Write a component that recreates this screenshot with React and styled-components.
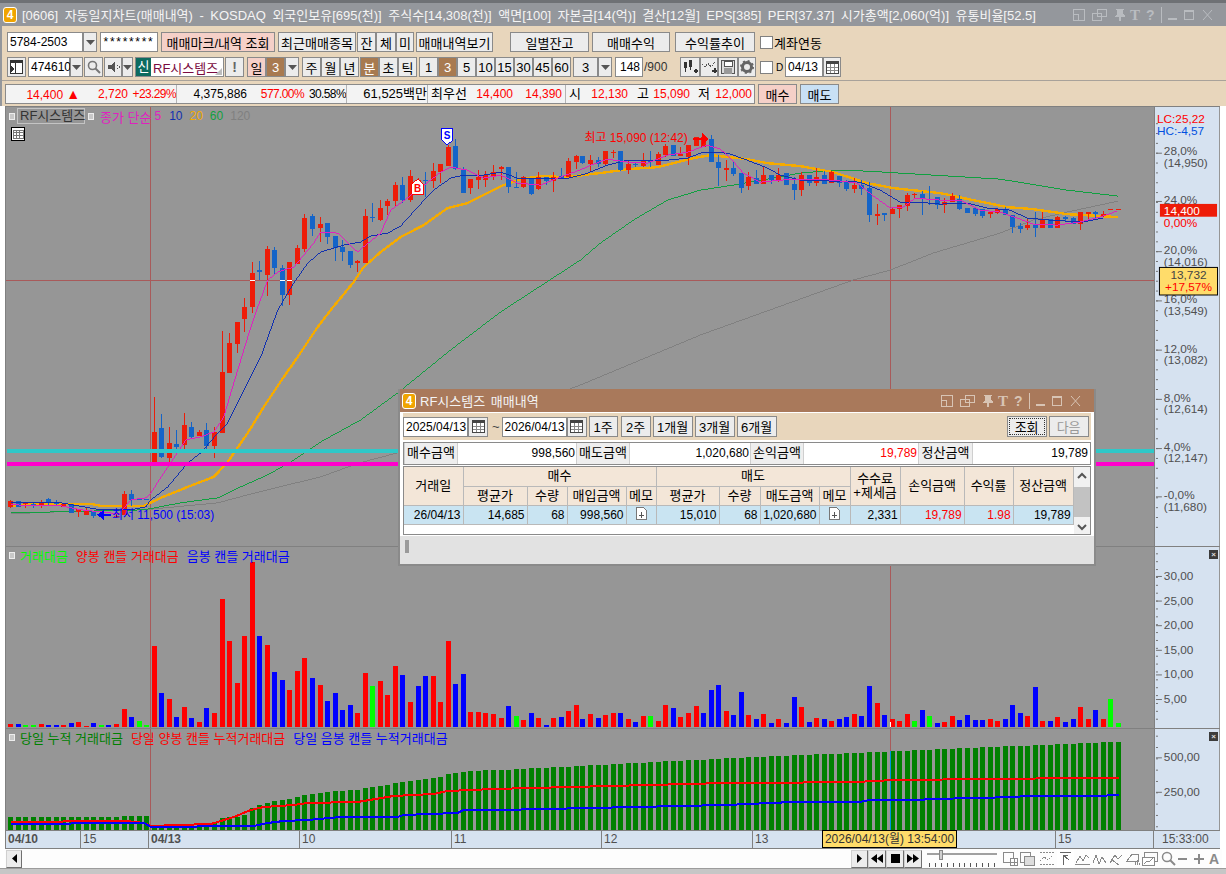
import React from 'react';
import styled, { createGlobalStyle } from 'styled-components';

const FONT = '"Liberation Sans","Noto Sans CJK KR",sans-serif';

const Global = createGlobalStyle`
  html,body{margin:0;padding:0;background:#fff;}
  body{font-family:${FONT};font-size:12px;color:#000;}
  *{box-sizing:border-box;}
`;

const Win = styled.div`
  position:relative; width:1226px; height:874px; overflow:hidden; background:#fff;
  border-top:3px solid #6e7175; display:flex; flex-direction:column;
`;
const TitleBar = styled.div`
  height:23px; display:flex; align-items:center; padding-left:${p=>p.$pl||3}px; flex:none;
  background:${p=>p.$bg||'#94979c'}; color:#f4f4f4; white-space:pre;
`;
const Badge = styled.div`
  width:14px; height:16px; border:1px solid #fff; border-radius:3px; background:#f0a400; color:#fff;
  font:bold 12px/14px ${FONT}; text-align:center; margin-right:${p=>p.$mr||5}px; flex:none;
`;
const TitleText = styled.span`
  font-size:13px; letter-spacing:${p=>p.$ls||0}px; word-spacing:${p=>p.$ws||0}px; flex:1; overflow:hidden;
`;
const Toolbar = styled.div`
  height:80px; flex:none; background:#e8d6bc; border-left:2px solid #94979c; padding:6px 0 0 5px;
`;
const Row = styled.div`
  display:flex; align-items:center; height:${p=>p.$h||20}px; margin-top:${p=>p.$mt||0}px;
`;
const Divider = styled.div`
  height:1px; background:#a8a29a; margin:3px 0 3px -5px;
`;
const Input = styled.div`
  width:${p=>p.$w}px; height:20px; flex:none; margin-left:${p=>p.$ml||0}px;
  background:#fff; border:1px solid #8a8a8a; padding:0 2px; line-height:18px; white-space:pre;
  text-align:${p=>p.$align||'left'}; letter-spacing:${p=>p.$ls||0}px;
`;
const Btn = styled.div`
  width:${p=>p.$w}px; height:${p=>p.$h||20}px; flex:none; margin-left:${p=>p.$ml||0}px;
  background:${p=>p.$bg||'#ececec'}; color:${p=>p.$color||'#000'};
  border:1px solid #8a8a8a; display:flex; align-items:center; justify-content:center;
  white-space:pre; font-size:13px;
`;
const Check = styled.div`
  width:13px; height:13px; flex:none; margin-left:${p=>p.$ml||0}px; background:#fff; border:1px solid #808080;
`;
const Label = styled.span`
  margin-left:${p=>p.$ml||0}px; color:${p=>p.$color||'#000'}; white-space:pre; flex:none;
  font-size:${p=>p.$size||13}px; ${p=>p.$w?`width:${p.$w}px;`:''}
`;
const NameBox = styled.div`
  width:89px; height:20px; margin-left:${p=>p.$ml||0}px; flex:none; display:flex; align-items:center;
  background:#fff; border:1px solid #8a8a8a; color:#7a0a40; position:relative; font-size:13px;
`;
const ShinTag = styled.span`
  width:15px; height:18px; background:#0d6b5f; color:#fff; text-align:center; line-height:18px; margin-right:2px; flex:none;
`;
const Corner = styled.span`
  position:absolute; right:1px; bottom:1px; width:0; height:0;
  border-left:7px solid transparent; border-bottom:7px solid #bdbdbd;
`;
const QuoteBox = styled.div`
  width:750px; height:20px; flex:none; margin-left:-2px; background:#f3f3f3; border:1px solid #8a8a8a;
  display:flex; align-items:center;
`;
const Quote = styled.span`
  width:${p=>p.$w}px; flex:none; height:18px; line-height:18px; white-space:pre;
  text-align:${p=>p.$left?'left':'right'}; color:${p=>p.$color||'#000'};
  padding-left:${p=>p.$left?3:0}px; margin-left:${p=>p.$ml||0}px;
  font-size:${p=>p.$size||12}px; letter-spacing:${p=>p.$ls||0}px;
  border-left:${p=>p.$sep?'1px solid #b4b4b4':'none'};
`;
const UpMark = styled.span`
  font-size:14px; margin-left:3px;
`;

const Chart = styled.div`
  flex:none; padding-left:5px; width:1220px; position:relative;
`;
const Pane = styled.div`
  position:relative; height:${p=>p.$h}px; display:grid; grid-template-columns:1149px 65px;
  border-top:1px solid #808080; background:#969696;
`;
const Plot = styled.svg`
  display:block; border-left:1px solid #808080;
`;
const Axis = styled.svg`
  display:block; background:#d6e2f0; border-left:1px solid #808080;
`;
const Legend = styled.div`
  position:absolute; left:${p=>p.$x}px; top:${p=>p.$y}px; display:flex; align-items:center; white-space:pre; height:16px;
`;
const LegendText = styled.span`
  color:${p=>p.$color}; margin-left:${p=>p.$ml||0}px; font-size:${p=>p.$size||13}px;
`;
const Dot = styled.span`
  width:6px; height:7px; background:#c8c8c8; border:1px solid #ededed; margin-right:${p=>p.$mr||0}px; margin-left:${p=>p.$ml||0}px; flex:none;
`;
const NameTag = styled.span`
  border:1px solid #c4c4c4; color:#333; height:16px; line-height:14px; padding:0 2px; width:68px; margin-left:2px; flex:none; font-size:13px;
`;
const GridTool = styled.svg`
  position:absolute; left:6px; top:20px;
`;
const CloseMark = styled.div`
  position:absolute; right:2px; top:${p=>p.$y}px; width:9px; height:9px; background:#3c3c3c; color:#ddd;
  font:bold 8px/9px ${FONT}; text-align:center;
`;
const TimeRow = styled.div`
  position:relative; height:19px; display:flex; background:#d6e2f0; border-top:1px solid #808080; border-bottom:1px solid #808080; width:1215px;
`;
const TimeCell = styled.div`
  width:${p=>p.$w}px; flex:none; height:17px; line-height:17px; padding-left:${p=>p.$pl||2}px; white-space:pre;
  color:#505050; font-weight:${p=>p.$bold?'bold':'normal'}; border-left:1px solid #808080;
`;
const TimeTip = styled.div`
  position:absolute; left:817px; top:-1px; width:135px; height:18px; background:#ffdc6a; border:1px solid #000;
  color:#333; line-height:16px; text-align:center; white-space:pre;
`;
const ScrollRow = styled.div`
  height:19px; display:flex; align-items:center; background:#fdfdfd; width:1217px;
`;
const ScrollTrack = styled.div`
  width:829px; flex:none;
`;
const ScrollBtn = styled.div`
  width:${p=>p.$w||17}px; height:18px; flex:none; margin-left:${p=>p.$ml||0}px; background:#ececec;
  border:1px solid #d0d0d0; border-right-color:#707070; border-bottom-color:#707070;
  display:flex; align-items:center; justify-content:center;
`;
const Bottom = styled.div`
  flex:1; border-top:1px solid #9c9c9c; background:#c6c6c6;
`;

const Dialog = styled.div`
  position:absolute; left:398px; top:386px; width:698px; height:177px; background:#fff;
  border:2px solid #8a8a8a; border-top:0; display:flex; flex-direction:column;
`;
const DlgTool = styled.div`
  height:27px; margin:1px 3px 0; background:#e8d6bc; display:flex; align-items:center; flex:none;
`;
const Sum = styled.div`
  height:23px; margin:2px 3px 0; border:1px solid #8a8a8a; display:flex; flex:none; background:#fff;
`;
const SumLabel = styled.div`
  width:${p=>p.$w}px; flex:none; background:#eeeeee; text-align:center; line-height:20px; font-size:13px;
  border-right:1px solid #cfcfcf; border-left:1px solid #cfcfcf;
`;
const SumVal = styled.div`
  width:${p=>p.$w}px; flex:none; text-align:right; line-height:20px; padding-right:1px; color:${p=>p.$color||'#000'};
`;
const TableBox = styled.div`
  height:69px; margin:1px 3px 0; border:1px solid #8a8a8a; display:flex; flex:none; background:#fff;
`;
const Table = styled.table`
  border-collapse:collapse; table-layout:fixed; width:669px; height:57px; flex:none;
  th{background:#f3e6d8; font-weight:normal; font-size:13px; border:1px solid #b9b9b9; height:19px; padding:0; white-space:pre; line-height:14px;}
  td{background:#c9e4f2; border:1px solid #b9b9b9; height:19px; padding:0 2px 0 0; text-align:right; white-space:pre; font-size:12px;}
  tr:first-child th{border-top:0;} th:first-child,td:first-child{border-left:0;}
  td.memo{text-align:center; padding:0;}
`;
const Red = styled.span`color:#f00;`;
const VScroll = styled.div`
  width:16px; flex:none; background:#f1f1f1; display:flex; flex-direction:column; align-items:center; justify-content:space-between; padding:5px 0 3px;
`;
const Thumb = styled.div`
  width:100%; height:30px; background:#c2c2c2;
`;
const DlgFoot = styled.div`
  flex:1; background:#e2e2e2; margin-top:1px; padding:4px 0 0 5px;
`;
const Grip = styled.div`
  width:4px; height:13px; background-image:radial-gradient(#9a9a9a 1px,transparent 1px); background-size:2px 2px;
`;
const Pad = styled.div`
  width:3px; flex:none;
`;

// pixel rows read from the chart: colour, body top, body bottom, wick top, wick bottom
const CANDLES = [
['r',501,507,500,508],['b',501,507],['r',503,504,502,508],['b',504,505,503,508],['r',502,505,500,508],
['b',499,503,498,505],['b',503,504,500,505],['r',504,507,503,507],['b',504,513],['r',509,512,509,517],
['r',511,515,508,515],['b',511,516,511,518],['b',515,516],['b',515,516],['r',516,517,513,518],
['r',494,515,491,515],['b',494,500,490,506],['b',499,500],['b',499,500],
['r',432,462,397,462],['b',428,457,414,458],['r',443,458,427,465],['b',444,447,430,449],['r',425,445,413,449],
['b',427,437,422,438],['r',432,436,430,436],['b',430,446,423,449],['r',432,446,427,458],['r',372,433,331,433],
['r',343,373,333,373],['r',322,344,322,353],['r',307,319,298,332],['r',273,307,262,313],['b',270,272,261,280],
['r',249,275,246,296],['b',250,268,247,275],['b',268,295,265,306],['r',262,295,262,305],['r',248,264,245,264],
['r',218,249,214,252],['b',216,229,214,236],['r',224,228,217,242],['b',223,237,223,244],['b',236,248,236,261],
['b',247,252,240,261],['b',251,265,251,268],['r',261,263,260,272],['r',216,263,209,263],['b',217,218,203,222],
['r',208,220,200,221],['r',201,206,199,215],['r',185,201,182,207],
['b',185,200,177,203],['r',176,200,170,202],['r',180,186,178,190],['b',180,181,172,197],['r',171,181,163,188],
['r',164,172,164,183],['r',147,166,145,166],['b',146,169,139,170],['b',169,193,167,193],['r',179,188,179,194],
['r',177,180,170,189],['r',175,180,171,187],['r',172,176,165,180],['r',167,169,166,180],['b',167,187,167,193],
['b',187,188,172,188],['r',177,187,176,188],['b',178,194,178,195],['r',177,189,172,190],['b',177,181,177,185],
['r',177,181,172,192],['b',176,178,168,179],['r',161,177,158,177],['r',156,162,155,169],['b',156,163,156,164],
['r',160,164,155,172],['b',160,164,157,167],['r',151,164,151,166],['r',152,153,150,158],['b',151,170,151,171],
['r',164,170,161,174],['b',164,165,162,167],['r',160,166,153,167],['b',161,162,151,167],['r',154,165,152,165],
['r',146,155,144,157],['b',145,156],['r',154,156,147,156],['r',145,157,145,165],['r',137,146],
['r',137,147],['b',139,162,135,162],['b',162,168,155,186],['r',168,170,160,181],['b',168,174,162,176],
['b',173,188,173,193],['r',177,186,172,190],['b',178,184,170,184],['r',175,184,166,184],['b',175,180,175,184],
['r',175,181,168,182],['b',173,185],['b',184,190,177,200],
['r',175,190,172,196],['b',175,183,175,186],['r',177,183,168,186],['b',175,184,171,184],['r',172,183,171,183],
['b',176,183,176,187],['b',182,189,180,191],['r',185,189,178,193],['b',185,189,180,195],['b',188,215,182,222],
['r',214,216,204,225],['b',213,215,213,221],['r',209,214,208,214],['r',205,209,205,218],['r',195,206,193,211],
['r',194,195,193,199],['b',194,199,191,215],['b',199,200,186,205],['b',197,205,197,209],['r',202,205,198,213],
['r',196,202,193,202],['b',199,209,195,210],['b',208,213],['b',208,214,208,216],['b',209,216,209,218],
['r',212,214,212,218],['r',209,213,209,214],['b',209,215,207,215],['b',215,227,215,233],['b',226,229,223,233],
['r',225,228,219,230],['b',224,228,212,237],['r',219,228,212,228],['b',219,228],['r',217,228,216,228],
['b',217,219,216,221],['b',218,224,217,224],['r',212,224,212,230],['r',212,214,212,221],['b',212,214,211,218],
['r',214,216,211,217],['r',209,210],['r',209,210],
];
// y of volume bars in two crops of the reference (crop row, colour)
const V1 = 'r552 b552 g556 g556 r552 b555 b555 r555 b549 r546 r558 b549 g556 b555 r552 r507 b531 g543 g555 r318 b459 r477 b531 r501 b534 r546 b504 r519 r177 r303 r429 r288 r66 b288 r315 b396 b420 r450 r393 r354 b414 r435 b483 b459 b510 b495 r519 r399 g438 r423 r465 r378 b405 r486 b438 b408 r408 r486 r303 b432 b402 r516 r516 r519 r522 r534';
const V2 = 'b438 g468 r480 b459 r474 b495 r474 b471 r453 r435 b477 r462 b474 r465 r459 b459 r477 b486 r468 g468 r483 r435 b444 r471 r459 r438 b459 b390 b375 r453 b465 b396 r465 b477 r462 b489 r477 b489 b411 r441 b486 r474 b477 r483 b477 b471 r462 b468 b378 r429 b465 r477 r483 r462 g483 b450 g468 b489 r486 r468 b480 b465 b480 b480 r477 r483 b477 b435 b459 r468 b381 r483 b483 r471 b486 b477 r441 r477 b450 r477 g417 g489';
const VOLS = [
  ...V1.split(' ').map(s=>[s[0],(561-+s.slice(1))/3]),
  ...V2.split(' ').map(s=>[s[0],(501-+s.slice(1))/3]),
];
const CUM_HEAD = [276,276,276,276,276,276,276,276,276,276,276,276,276,276,276,273,273,273,273,307,305,304,302,300,298,296,294,290,280,277,275,270,250,240,233,228,225,222,216,210,207,204,201,198,198,195,195,189,186,183,180,174,171,168,165,162,159,156,147,144,141,138,138,135,135,135];
const cumTop = i => {
  let z;
  if (i < CUM_HEAD.length) z = CUM_HEAD[i];
  else if (i <= 96) z = 135 - (i-65)*36/31;
  else z = 99 - (i-96)*49/51;
  return Math.round(725 + z/3);
};
const bx = i => Math.round(9.4 + 7.54*i);

const MA5 = '10,505 60,506 80,510 118,514 130,500 145,498 150,493 167,467 185,440 200,437 213,432 223,417 233,383 247,337 257,307 267,280 277,272 293,267 313,243 320,232 337,233 347,243 357,252 365,245 380,233 390,210 400,203 417,190 430,180 440,172 450,167 467,170 483,178 500,175 517,183 540,185 557,178 573,172 590,165 607,159 627,162 647,163 667,155 687,152 707,145 720,149 730,158 743,173 760,182 780,180 800,179 833,180 857,183 872,195 890,208 903,207 915,198 940,200 960,200 980,210 1000,212 1017,218 1033,224 1057,225 1080,222 1100,217 1117,211';
const MA10 = '10,503 60,503 100,510 130,510 145,507 150,500 167,487 187,463 200,453 217,433 227,423 243,390 260,357 277,310 293,283 307,263 320,252 343,245 360,242 370,236 387,233 400,226 417,207 433,190 450,178 463,175 483,175 500,172 517,178 543,178 567,178 587,173 607,165 627,160 667,160 687,158 703,152 727,153 747,160 767,168 780,175 800,180 833,181 860,182 880,190 900,202 917,202 940,204 967,203 987,208 1010,210 1027,218 1050,220 1083,222 1103,218';
const MA20 = '10,506 33,504 90,504 100,506 143,506 160,498 187,487 213,477 227,462 247,433 263,407 283,377 297,357 317,327 330,310 353,282 363,267 380,252 400,237 423,225 447,208 467,203 483,195 503,185 520,179 540,176 567,177 590,174 607,172 627,169 657,167 677,162 693,158 710,155 747,159 767,163 800,166 833,172 867,183 893,188 940,193 973,200 1007,207 1033,209 1067,214 1083,215 1118,217';
const MA60 = '10,513 57,512 143,510 180,503 217,498 240,487 267,475 290,462 320,442 360,420 397,393 450,350 500,312 580,260 600,243 633,220 667,200 700,190 733,185 767,179 800,173 833,170 867,171 933,175 1000,179 1067,190 1118,196';
const MA120 = '10,514 57,512 143,510 217,503 247,495 287,485 320,477 353,465 370,460 397,453 580,385 700,335 800,299 853,280 890,270 933,253 1000,233 1033,220 1067,212 1118,201';
const CUM_RED = '10,822 125,821 143,823 150,826 210,824 217,822 233,817 250,810 263,807 293,805 307,803 357,802 393,796 433,794 447,791 493,789 726,783 799,783 806,782 856,782 893,780 993,779 1079,778 1119,778';
const CUM_BLUE = '10,824 143,823 150,827 253,826 267,823 283,821 307,820 340,817 397,817 403,815 457,813 463,810 500,810 726,805 793,802 859,802 869,800 923,800 926,799 983,798 1033,796 1096,796 1119,795';

const COL = { r:'#ee1c08', b:'#1464c8' };
const VCOL = { r:'#ff0000', b:'#0000ff', g:'#00ff00' };
const HAIR = '#a85a5a';
const AXTXT = '#505050';

function Candles(){
  return CANDLES.map((c,i)=>{
    const [k,t,b,h=t,l=b]=c; const x=bx(i);
    return (
      <g key={i} fill={COL[k]}>
        <rect x={x} y={h} width={1} height={l-h}/>
        <rect x={x-2} y={t} width={5} height={Math.max(b-t,1)}/>
        {t<280&&b>280&&<rect x={x-2} y={280} width={5} height={1} fill="#fff"/>}
      </g>
    );
  });
}

function PriceChart(){
  return (
    <Plot width={1149} height={439} viewBox="5 107 1149 439" shapeRendering="crispEdges">
      <rect x={5} y={280} width={1149} height={1} fill={HAIR}/>
      <rect x={149} y={107} width={1} height={439} fill={HAIR}/>
      <rect x={890} y={107} width={1} height={439} fill={HAIR}/>
      <polyline points={MA120} fill="none" stroke="#808080" strokeWidth={1}/>
      <polyline points={MA60} fill="none" stroke="#10a040" strokeWidth={1}/>
      <polyline points={MA20} fill="none" stroke="#f5ab00" strokeWidth={2.4}/>
      <Candles/>
      <polyline points={MA10} fill="none" stroke="#1030b0" strokeWidth={1}/>
      <polyline points={MA5} fill="none" stroke="#e020c0" strokeWidth={1}/>
      <rect x={6} y={449} width={1148} height={4} fill="#30c8c8"/>
      <rect x={6} y={462} width={1148} height={4} fill="#ff00cc"/>
      <text x={584} y={142} fontSize={12} fill="#f00" shapeRendering="auto">최고 15,090 (12:42)</text>
      <polygon points="702,133 708,139 702,145" fill="#f00"/>
      <rect x={693} y={138} width={10} height={2} fill="#f00"/>
      <text x={111} y={519} fontSize={12} fill="#00f">최저 11,500 (15:03)</text>
      <polygon points="96,515 103,510 103,520" fill="#00f"/>
      <rect x={103} y={514} width={7} height={2} fill="#00f"/>
      <path d="M441 128h11v12l-5.5 5-5.5-5z" fill="#fff" stroke="#00f"/>
      <text x={446.5} y={139} fontSize={10} fontWeight="bold" textAnchor="middle" fill="#00f">S</text>
      <path d="M417 179l6 5v10h-12v-10z" fill="#fff" stroke="#f00"/>
      <text x={417} y={192} fontSize={10} fontWeight="bold" textAnchor="middle" fill="#f00">B</text>
    </Plot>
  );
}

function AxisLabels({items,x=1163}){
  return items.map(([t,y,c])=>(
    <text key={t+y} x={x} y={y+4} fontSize={12} fill={c||AXTXT}>{t}</text>
  ));
}
function Ticks({from,to,step,majors}){
  const out=[];
  for(let y=from;y<to;y+=step) out.push(<rect key={y} x={1155} y={y} width={2} height={1} fill="#707070"/>);
  majors.forEach(y=>out.push(<rect key={'m'+y} x={1155} y={y} width={6} height={1} fill="#707070"/>));
  return out;
}

function PriceAxis(){
  return (
    <Axis width={65} height={439} viewBox="1154 107 65 439">
      <Ticks from={120} to={540} step={10} majors={[150,199,250,300,350,400,450,499]}/>
      <text x={1156} y={120} fontSize={12} fill="#f00">LC:25,22</text>
      <text x={1156} y={132} fontSize={12} fill="#0050e0">HC:-4,57</text>
      <AxisLabels items={[['28,0%',148],['(14,950)',161],['24,0%',198],['0,00%',221,'#f00'],['20,0%',249],['(14,016)',261],['16,0%',299],['(13,549)',311],['12,0%',349],['(13,082)',361],['8,0%',399],['(12,614)',410],['4,0%',449],['(12,147)',460],['-0,0%',498],['(11,680)',510]]}/>
      <rect x={1159} y={202} width={58} height={13} fill="#ee1c08"/>
      <text x={1163} y={213} fontSize={12} fill="#fff">14,400</text>
      <rect x={1158.5} y={266.5} width={59} height={28} fill="#ffdc6a" stroke="#000"/>
      <text x={1188} y={278} fontSize={12} textAnchor="middle" fill="#444">13,732</text>
      <text x={1188} y={290} fontSize={12} textAnchor="middle" fill="#f00">+17,57%</text>
    </Axis>
  );
}

function VolumeChart(){
  return (
    <Plot width={1149} height={181} viewBox="5 547 1149 181" shapeRendering="crispEdges">
      <rect x={149} y={547} width={1} height={181} fill={HAIR}/>
      <rect x={890} y={547} width={1} height={181} fill={HAIR}/>
      {VOLS.map(([k,h],i)=>{
        const H=Math.round(h);
        return <rect key={i} x={bx(i)-2} y={727-H} width={5} height={H} fill={VCOL[k]}/>;
      })}
      <rect x={890} y={722} width={1} height={5} fill="#fff"/>
    </Plot>
  );
}

function CumChart(){
  return (
    <Plot width={1149} height={101} viewBox="5 729 1149 101" shapeRendering="crispEdges">
      <rect x={149} y={729} width={1} height={101} fill={HAIR}/>
      <rect x={890} y={729} width={1} height={101} fill={HAIR}/>
      {CANDLES.map((_,i)=>{
        const t=cumTop(i);
        return <rect key={i} x={bx(i)-2} y={t} width={5} height={830-t} fill="#008000"/>;
      })}
      <rect x={890} y={751} width={1} height={79} fill="#0090e0"/>
      <polyline points={CUM_RED} fill="none" stroke="#f00" strokeWidth={2}/>
      <polyline points={CUM_BLUE} fill="none" stroke="#00f" strokeWidth={2}/>
    </Plot>
  );
}

function WinIcons({c}){
  return (
    <svg width={150} height={18} viewBox="0 0 150 18" style={{flex:'none'}} fill="none" stroke={c} shapeRendering="crispEdges">
      <rect x="0.5" y="3.5" width="11" height="11"/><path d="M0.5 8.5h5v6"/>
      <rect x="24.5" y="3.5" width="9" height="7"/><rect x="19.5" y="7.5" width="9" height="7" fill="none"/>
      <path d="M43 3h8v1h-1v4l2 2v1H42v-1l2-2V4h-1zM47 11v5" fill={c} stroke="none"/>
      <rect x="46" y="11" width="2" height="4" fill={c} stroke="none"/>
      <text x="57" y="14" fontSize={15} fontFamily='"Liberation Serif",serif' fontWeight="bold" fill={c} stroke="none">T</text>
      <text x="73" y="14" fontSize={14} fontWeight="bold" fill={c} stroke="none">?</text>
      <path d="M88.5 1v16"/>
      <rect x="95" y="12" width="9" height="2" fill={c} stroke="none"/>
      <rect x="111.5" y="4.5" width="9" height="9"/><rect x="111" y="4" width="10" height="2" fill={c} stroke="none"/>
      <path d="M130 4l9 10M139 4l-9 10" shapeRendering="auto"/>
    </svg>
  );
}

const Ico = ({w=16,h=16,children})=>(
  <svg width={w} height={h} viewBox={`0 0 ${w} ${h}`} shapeRendering="crispEdges">{children}</svg>
);
const Calendar = ()=>(
  <Ico w={13} h={13}>
    <rect x="0.5" y="0.5" width="12" height="12" fill="#fff" stroke="#444"/>
    <rect x="0" y="0" width="13" height="3" fill="#444"/>
    <path d="M4.5 3v9M8.5 3v9M1 6.5h11M1 9.5h11" stroke="#888"/>
  </Ico>
);
const Caret = ({c='#555'})=>(
  <svg width={9} height={5} viewBox="0 0 9 5"><path d="M0 0h9L4.5 5z" fill={c}/></svg>
);
const Arrow = ({up})=>(
  <svg width={10} height={7} viewBox="0 0 10 7" fill="none" stroke="#555" strokeWidth={2}>
    <path d={up?'M1 6l4-4 4 4':'M1 1l4 4 4-4'}/>
  </svg>
);
const Doc = ()=>(
  <svg width={11} height={13} viewBox="0 0 11 13" shapeRendering="crispEdges">
    <path d="M0.5 0.5h7l3 3v9h-10z" fill="#fff" stroke="#777"/>
    <path d="M5.5 5v6M3 8h5" stroke="#555"/>
  </svg>
);
const Tri = ({d='r'})=>(
  <svg width={7} height={9} viewBox="0 0 7 9"><path d={d==='r'?'M1 0l5 4.5L1 9z':'M6 0L1 4.5 6 9z'} fill="#000"/></svg>
);
const Dbl = ({d='r'})=>(
  <svg width={12} height={9} viewBox="0 0 12 9"><path d={d==='r'?'M0 0l6 4.5L0 9zM6 0l6 4.5L6 9z':'M6 0L0 4.5 6 9zM12 0L6 4.5 12 9z'} fill="#000"/></svg>
);

function BottomIcons(){
  return (
    <svg width={222} height={18} viewBox="0 0 222 18" style={{flex:'none',marginLeft:4}} fill="none" stroke="#8a8a8a" shapeRendering="crispEdges">
      <rect x="0.5" y="2.5" width="10" height="10"/><rect x="7.5" y="8.5" width="7" height="7" fill="#fff"/><path d="M11 9v6M8 12h6"/>
      <rect x="17.5" y="2.5" width="10" height="10"/><rect x="21.5" y="6.5" width="10" height="9" fill="#ddd"/>
      <path d="M36.5 2.5h14M36.5 14.5h14M37 11l4-4 4 3 5-5" strokeDasharray="2 1"/>
      <rect x="54" y="0" width="17" height="18" fill="#fff" stroke="none"/>
      <path d="M57 2.5h11M60 5l6 5M60 5v10M60 5h5" stroke="#666"/>
      <path d="M73 13l4-7 3 5 3-6 3 3M72 14h15" strokeWidth="1"/>
      <path d="M90 13l3-8 3 9 3-7 4 6"/>
      <path d="M107 13l5-8 3 4 4-4M108 9l8 6"/>
      <path d="M124 11l5-7h6v7h-8zM132 12v3M134 10v5M136 13v2"/>
      <rect x="141.5" y="2.5" width="13" height="9"/><rect x="139.5" y="7.5" width="12" height="8" fill="#fff"/><path d="M141 14l3-3 2 1 4-4"/>
      <circle cx="164" cy="7" r="4.5" shapeRendering="auto" strokeWidth="1.5"/><path d="M167 10l5 5" strokeWidth="2" shapeRendering="auto"/>
      <rect x="175" y="8" width="9" height="2" fill="#8a8a8a" stroke="none"/>
      <path d="M191 9h10M196 4v10" strokeWidth="2"/>
      <text x="206" y="14" fontSize={14} fontWeight="bold" fill="#8a8a8a" stroke="none">A</text>
    </svg>
  );
}

const Slider = ()=>(
  <svg width={72} height={18} viewBox="0 0 72 18" style={{flex:'none',marginLeft:5}} shapeRendering="crispEdges">
    <rect x="0" y="3" width="70" height="2" fill="#a0a0a0"/>
    <rect x="12" y="0" width="3" height="9" fill="#d0d0d0" stroke="#888"/>
    {[0,1,2,3,4,5,6,7,8,9,10,11].map(i=><rect key={i} x={2+i*5.9} y={13} width={1} height={4} fill="#555"/>)}
  </svg>
);

export default function App(){
  return (
    <Win>
      <Global/>
      <TitleBar>
        <Badge>4</Badge>
        <TitleText $ws={2.9}>[0606] 자동일지차트(매매내역) - KOSDAQ 외국인보유[695(천)] 주식수[14,308(천)] 액면[100] 자본금[14(억)] 결산[12월] EPS[385] PER[37.37] 시가총액[2,060(억)] 유통비율[52.5]</TitleText>
        <WinIcons c="#b9bcc0"/>
        <Pad/>
      </TitleBar>

      <Toolbar>
        <Row>
          <Input $w={76}>5784-2503</Input>
          <Btn $w={14}><Caret/></Btn>
          <Input $w={58} $ml={3} $align="center" $ls={1.7}>********</Input>
          <Btn $w={114} $ml={3} $bg="#f5d0c8">매매마크/내역 조회</Btn>
          <Btn $w={78} $ml={3}>최근매매종목</Btn>
          <Btn $w={19} $ml={1}>잔</Btn>
          <Btn $w={20}>체</Btn>
          <Btn $w={18}>미</Btn>
          <Btn $w={77} $ml={2}>매매내역보기</Btn>
          <Btn $w={79} $ml={17}>일별잔고</Btn>
          <Btn $w={78} $ml={3}>매매수익</Btn>
          <Btn $w={80} $ml={5}>수익률추이</Btn>
          <Check $ml={5}/>
          <Label $ml={1}>계좌연동</Label>
        </Row>
        <Row $mt={5}>
          <Btn $w={19}>
            <Ico w={13} h={14}>
              <rect x="0.5" y="0.5" width="12" height="13" fill="#fff" stroke="#333"/>
              <rect x="0" y="0" width="13" height="3" fill="#333"/>
              <path d="M5 3v11" stroke="#333"/><path d="M1 6l4 3-4 3z" fill="#333"/>
            </Ico>
          </Btn>
          <Input $w={42} $ml={2}>474610</Input>
          <Btn $w={13}><Caret/></Btn>
          <Btn $w={19} $ml={1}>
            <Ico w={14} h={14}>
              <circle cx="5.5" cy="5.5" r="4" fill="none" stroke="#777" strokeWidth="1.6" shapeRendering="auto"/>
              <path d="M8.5 8.5l4.5 4.5" stroke="#777" strokeWidth="2" shapeRendering="auto"/>
            </Ico>
          </Btn>
          <Btn $w={18} $ml={1}>
            <Ico w={13} h={12}><path d="M1 4h3l4-4v12L4 8H1z" fill="#555"/><path d="M10 4v1M10 7v1M12 5v2" stroke="#555"/></Ico>
          </Btn>
          <Btn $w={11}><Caret/></Btn>
          <NameBox $ml={2}><ShinTag>신</ShinTag>RF시스템즈<Corner/></NameBox>
          <Btn $w={19} $ml={1}><b style={{color:'#666',fontSize:14}}>!</b></Btn>
          <Btn $w={19} $ml={3} $bg="#f5d0c8">일</Btn>
          <Btn $w={19} $bg="#a87a50" $color="#fff">3</Btn>
          <Btn $w={14}><Caret/></Btn>
          <Btn $w={19} $ml={3}>주</Btn>
          <Btn $w={19}>월</Btn>
          <Btn $w={19}>년</Btn>
          <Btn $w={19} $ml={1} $bg="#a87a50" $color="#fff">분</Btn>
          <Btn $w={19}>초</Btn>
          <Btn $w={19}>틱</Btn>
          <Btn $w={19} $ml={2}>1</Btn>
          <Btn $w={19} $bg="#a87a50" $color="#fff">3</Btn>
          <Btn $w={19}>5</Btn>
          <Btn $w={19}>10</Btn>
          <Btn $w={19}>15</Btn>
          <Btn $w={19}>30</Btn>
          <Btn $w={19}>45</Btn>
          <Btn $w={19}>60</Btn>
          <Btn $w={25} $ml={2}>3</Btn>
          <Btn $w={14}><Caret/></Btn>
          <Input $w={28} $ml={3} $align="right">148</Input>
          <Label $ml={1} $color="#333" $size={12} $w={25}>/900</Label>
          <Btn $w={20} $ml={11}>
            <Ico w={15} h={14}><path d="M1 2h3v6H1zM6 0h3v7H6z" fill="#333"/><path d="M11 11h4M13 9v4" stroke="#333" strokeWidth="2"/><path d="M2 8v4M7 7v3" stroke="#333"/></Ico>
          </Btn>
          <Btn $w={18}>
            <Ico w={15} h={14}><path d="M0 4l3 3 3-4 3 4 4-5" fill="none" stroke="#555" strokeDasharray="2 1"/><path d="M10 11h5M12.5 8v5" stroke="#333" strokeWidth="2"/></Ico>
          </Btn>
          <Btn $w={20}>
            <Ico w={14} h={14}><rect x="0.5" y="0.5" width="13" height="13" fill="#ddd" stroke="#555"/><rect x="3" y="1" width="8" height="5" fill="#fff" stroke="#555"/><rect x="3" y="8" width="8" height="6" fill="#999"/></Ico>
          </Btn>
          <Btn $w={18}>
            <svg width={14} height={14} viewBox="0 0 14 14"><circle cx="7" cy="7" r="4.5" fill="none" stroke="#666" strokeWidth="3"/><circle cx="7" cy="7" r="6" fill="none" stroke="#666" strokeWidth="2" strokeDasharray="2 2.7"/></svg>
          </Btn>
          <Check $ml={4}/>
          <Label $ml={3} $size={10} $w={6}>D</Label>
          <Input $w={38} $ml={3}>04/13</Input>
          <Btn $w={18}><Calendar/></Btn>
        </Row>
        <Divider/>
        <Row>
          <QuoteBox>
            <Quote $w={74} $color="#f00">14,400<UpMark>▲</UpMark></Quote>
            <Quote $w={48} $color="#f00">2,720</Quote>
            <Quote $w={48} $color="#f00" $ls={-0.6}>+23.29%</Quote>
            <Quote $w={71} $sep>4,375,886</Quote>
            <Quote $w={57} $color="#f00" $ls={-0.6}>577.00%</Quote>
            <Quote $w={42} $ls={-0.6}>30.58%</Quote>
            <Quote $w={81} $sep $size={13}>61,525백만</Quote>
            <Quote $w={42} $sep $left $size={13}>최우선</Quote>
            <Quote $w={44} $color="#f00">14,400</Quote>
            <Quote $w={49} $color="#f00">14,390</Quote>
            <Quote $w={19} $sep $left $ml={3} $size={13}>시</Quote>
            <Quote $w={44} $color="#f00">12,130</Quote>
            <Quote $w={21} $size={13}>고</Quote>
            <Quote $w={41} $color="#f00">15,090</Quote>
            <Quote $w={20} $size={13}>저</Quote>
            <Quote $w={42} $color="#f00">12,000</Quote>
          </QuoteBox>
          <Btn $w={39} $ml={3} $bg="#f5d0c8">매수</Btn>
          <Btn $w={39} $ml={3} $bg="#c8e0f5">매도</Btn>
        </Row>
      </Toolbar>

      <Chart>
        <Pane $h={440}>
          <PriceChart/>
          <PriceAxis/>
          <Legend $x={4} $y={1}>
            <Dot/>
            <NameTag>RF시스템즈</NameTag>
            <Dot $ml={3}/>
            <LegendText $ml={6} $color="#e020c0">종가 단순</LegendText>
            <LegendText $ml={3} $size={12} $color="#e020c0">5</LegendText>
            <LegendText $ml={8} $size={12} $color="#1030b0">10</LegendText>
            <LegendText $ml={7} $size={12} $color="#f5ab00">20</LegendText>
            <LegendText $ml={7} $size={12} $color="#10a040">60</LegendText>
            <LegendText $ml={7} $size={12} $color="#808080">120</LegendText>
          </Legend>
          <GridTool width={14} height={14} viewBox="0 0 14 14" shapeRendering="crispEdges">
            <rect x="0.5" y="0.5" width="13" height="13" fill="#fff" stroke="#000"/>
            <path d="M2 3h10v8H2zM5.5 3v8M8.5 3v8M2 5.5h10M2 8.5h10" fill="none" stroke="#777"/>
          </GridTool>
        </Pane>
        <Pane $h={182}>
          <VolumeChart/>
          <Axis width={65} height={181} viewBox="1154 547 65 181">
            <Ticks from={552} to={727} step={8} majors={[575,600,625,650,675,700]}/>
            <AxisLabels items={[['30,00',575],['25,00',600],['20,00',625],['15,00',650],['10,00',675],['5,00',700]]}/>
          </Axis>
          <Legend $x={4} $y={0}>
            <Dot/>
            <LegendText $ml={5} $color="#00ff00">거래대금</LegendText>
            <LegendText $ml={8} $color="#f00">양봉 캔들 거래대금</LegendText>
            <LegendText $ml={8} $color="#00f">음봉 캔들 거래대금</LegendText>
          </Legend>
          <CloseMark $y={3}>×</CloseMark>
        </Pane>
        <Pane $h={102}>
          <CumChart/>
          <Axis width={65} height={101} viewBox="1154 729 65 101">
            <Ticks from={735} to={830} step={11.5} majors={[757,792]}/>
            <AxisLabels items={[['500,00',757],['250,00',792]]}/>
          </Axis>
          <Legend $x={4} $y={0}>
            <Dot/>
            <LegendText $ml={5} $color="#008000">당일 누적 거래대금</LegendText>
            <LegendText $ml={8} $color="#f00">당일 양봉 캔들 누적거래대금</LegendText>
            <LegendText $ml={8} $color="#00f">당일 음봉 캔들 누적거래대금</LegendText>
          </Legend>
          <CloseMark $y={3}>×</CloseMark>
        </Pane>
        <TimeRow>
          <TimeCell $w={75} $bold>04/10</TimeCell>
          <TimeCell $w={68}>15</TimeCell>
          <TimeCell $w={151} $bold>04/13</TimeCell>
          <TimeCell $w={152}>10</TimeCell>
          <TimeCell $w={150}>11</TimeCell>
          <TimeCell $w={151}>12</TimeCell>
          <TimeCell $w={303}>13</TimeCell>
          <TimeCell $w={98}>15</TimeCell>
          <TimeCell $w={65} $pl={8}>15:33:00</TimeCell>
          <TimeTip>2026/04/13(월) 13:54:00</TimeTip>
        </TimeRow>
        <ScrollRow>
          <ScrollBtn $w={16} $ml={1}><Tri d="l"/></ScrollBtn>
          <ScrollTrack/>
          <ScrollBtn><Tri/></ScrollBtn>
          <ScrollBtn $w={18}><Dbl d="l"/></ScrollBtn>
          <ScrollBtn $w={18}><svg width={9} height={9}><rect width={9} height={9} fill="#000"/></svg></ScrollBtn>
          <ScrollBtn $w={18}><Dbl/></ScrollBtn>
          <Slider/>
          <BottomIcons/>
        </ScrollRow>
      </Chart>
      <Bottom/>

      <Dialog>
        <TitleBar $bg="#a9795b" $pl={2}>
          <Badge $mr={4}>4</Badge>
          <TitleText $ws={2}>RF시스템즈 매매내역</TitleText>
          <WinIcons c="#d8c4b4"/>
          <Pad/>
        </TitleBar>
        <DlgTool>
          <Input $w={65}>2025/04/13</Input>
          <Btn $w={20}><Calendar/></Btn>
          <Label $ml={4} $color="#444">~</Label>
          <Input $w={65} $ml={2}>2026/04/13</Input>
          <Btn $w={20}><Calendar/></Btn>
          <Btn $w={29} $ml={2} $h={21}>1주</Btn>
          <Btn $w={30} $ml={3} $h={21}>2주</Btn>
          <Btn $w={40} $ml={2} $h={21}>1개월</Btn>
          <Btn $w={40} $ml={2} $h={21}>3개월</Btn>
          <Btn $w={40} $ml={2} $h={21}>6개월</Btn>
          <Btn $w={40} $ml={230} $h={21} style={{outline:'1px dotted #333',outlineOffset:-3}}>조회</Btn>
          <Btn $w={40} $ml={2} $h={21} $color="#999">다음</Btn>
        </DlgTool>
        <Sum>
          <SumLabel $w={54}>매수금액</SumLabel>
          <SumVal $w={118}>998,560</SumVal>
          <SumLabel $w={54}>매도금액</SumLabel>
          <SumVal $w={120}>1,020,680</SumVal>
          <SumLabel $w={54}>손익금액</SumLabel>
          <SumVal $w={114} $color="#f00">19,789</SumVal>
          <SumLabel $w={55}>정산금액</SumLabel>
          <SumVal $w={116}>19,789</SumVal>
        </Sum>
        <TableBox>
          <Table>
            <colgroup>
              {[59,64,40,59,30,63,41,59,31,50,64,49,60].map((w,i)=><col key={i} style={{width:w}}/>)}
            </colgroup>
            <thead>
              <tr>
                <th rowSpan={2}>거래일</th>
                <th colSpan={4}>매수</th>
                <th colSpan={4}>매도</th>
                <th rowSpan={2}>수수료<br/>+제세금</th>
                <th rowSpan={2}>손익금액</th>
                <th rowSpan={2}>수익률</th>
                <th rowSpan={2}>정산금액</th>
              </tr>
              <tr>
                <th>평균가</th><th>수량</th><th>매입금액</th><th>메모</th>
                <th>평균가</th><th>수량</th><th>매도금액</th><th>메모</th>
              </tr>
            </thead>
            <tbody>
              <tr>
                <td>26/04/13</td><td>14,685</td><td>68</td><td>998,560</td>
                <td className="memo"><Doc/></td>
                <td>15,010</td><td>68</td><td>1,020,680</td>
                <td className="memo"><Doc/></td>
                <td>2,331</td><td><Red>19,789</Red></td><td><Red>1.98</Red></td><td>19,789</td>
              </tr>
            </tbody>
          </Table>
          <VScroll>
            <Arrow up/>
            <Thumb/>
            <Arrow/>
          </VScroll>
        </TableBox>
        <DlgFoot><Grip/></DlgFoot>
      </Dialog>
    </Win>
  );
}
